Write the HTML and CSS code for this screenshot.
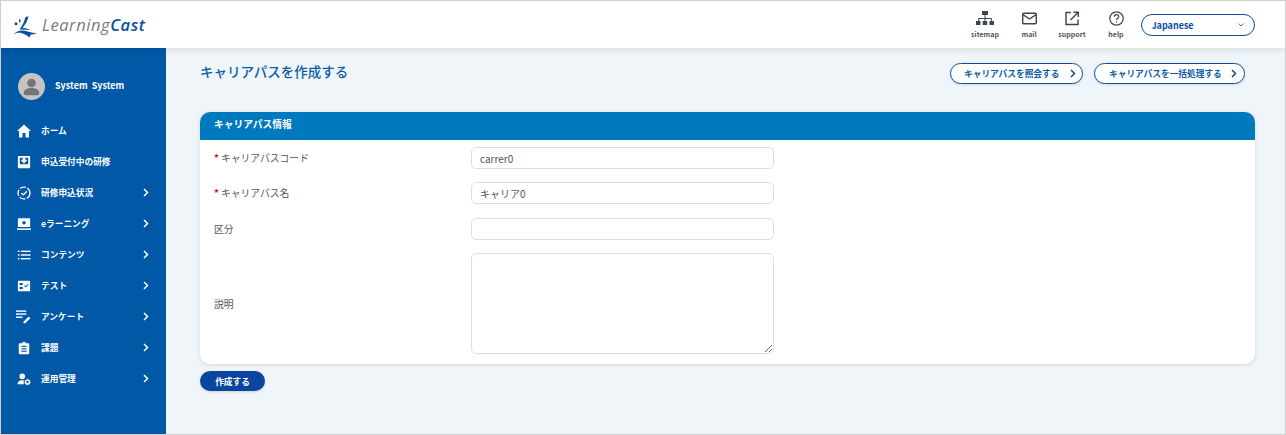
FILE: index.html
```html
<!DOCTYPE html>
<html lang="ja">
<head>
<meta charset="utf-8">
<title>LearningCast</title>
<link rel="stylesheet" href="styles.css">
</head>
<body>
<div class="frame">
  <header class="topbar">
    <div class="logo">
      <svg class="logo-mark" width="24" height="22" viewBox="0 0 24 22"><path fill="#0a50a0" d="M12.500 1 15.500.2C14.500 4.500 12.500 8.500 9.500 12L13 12.300 17.500 14.200C13.500 13.500 10 13.300 6.500 13.500 9.500 9.500 11.300 5.500 12.500 1Z"/><circle cx="3" cy="7.700" r="1.500" fill="#0a50a0"/><path fill="#0a50a0" d="M6 3.500 7.500 3.300 7.500 6.300 6.200 6.500Z"/><path fill="#0a50a0" d="M0 18.500C3.500 15 7 14 10.500 14.500 15 15.200 19 17.300 23.500 17 21 18.500 19 18.800 17.800 18.500L16.500 21.500C13.500 19.300 10.500 17.300 7.500 16.800 4.500 16.400 2.500 17 0 18.500Z"/></svg>
      <span class="logo-text"><span class="logo-a">Learning</span><span class="logo-b">Cast</span></span>
    </div>
    <nav class="tools">
      <a class="tool tool-sitemap">
        <svg width="18" height="15" viewBox="0 0 18 15" fill="#3c4650"><rect x="6" y="0" width="6" height="4"/><rect x="0" y="10" width="4.500" height="4"/><rect x="6.700" y="10" width="4.500" height="4"/><rect x="13.500" y="10" width="4.500" height="4"/><path d="M8.500 4h1v3h6.300v3h-1V8H9.500v2h-1V8H3.200v2h-1V7h6.300z"/></svg>
        <span>sitemap</span>
      </a>
      <a class="tool tool-mail">
        <svg width="15" height="12" viewBox="0 0 15 12" fill="none" stroke="#3c4650" stroke-width="1.400"><rect x=".7" y=".7" width="13.600" height="10.600" rx="1"/><path d="M.9 2.200 7.500 6.500 14.100 2.200"/></svg>
        <span>mail</span>
      </a>
      <a class="tool tool-support">
        <svg width="14" height="14" viewBox="0 0 14 14" fill="none" stroke="#3c4650" stroke-width="1.400"><path d="M6 1H1v12h12V8"/><path d="M5.500 8.500 13 1M8.500 .7h4.800v4.800"/></svg>
        <span>support</span>
      </a>
      <a class="tool tool-help">
        <svg width="15" height="15" viewBox="0 0 15 15" fill="none" stroke="#3c4650" stroke-width="1.200"><circle cx="7.500" cy="7.500" r="6.700"/><path d="M5.300 5.800C5.300 4.500 6.300 3.700 7.500 3.700S9.700 4.500 9.700 5.700C9.700 7.200 7.500 7.200 7.500 9"/><path d="M7.500 10.300v1.200"/></svg>
        <span>help</span>
      </a>
      <div class="lang">
        <span>Japanese</span>
        <svg width="6" height="4" viewBox="0 0 6 4" fill="none" stroke="#4a78ad" stroke-width="1"><path d="M.5.500 3 3 5.500.500"/></svg>
      </div>
    </nav>
  </header>
  <div class="body">
    <aside class="sidebar">
      <div class="user">
        <svg class="avatar" width="27" height="27" viewBox="0 0 27 27"><circle cx="13.500" cy="13.500" r="13.500" fill="#c4c4c4"/><circle cx="13.500" cy="10" r="4.300" fill="#757575"/><path fill="#757575" d="M5.800 20c0-3.800 4.300-5 7.700-5s7.700 1.200 7.700 5c0 1.300-1 2.300-2.300 2.300H8.100C6.800 22.300 5.800 21.300 5.800 20Z"/></svg>
        <span>System&nbsp; System</span>
      </div>
      <ul class="menu">
        <li class="item">
          <svg class="ico ico-home" width="16" height="16" viewBox="0 0 16 16" fill="#fff"><path d="M8 1.500 1 8h2v6.500h3.500V10h3v4.500H13V8h2z"/></svg>
          <span class="lbl">ホーム</span>
        </li>
        <li class="item">
          <svg class="ico" width="14" height="14" viewBox="0 0 16 16"><path fill="#fff" fill-rule="evenodd" d="M2 1h12c.6 0 1 .4 1 1v12c0 .6-.4 1-1 1H2c-.6 0-1-.4-1-1V2c0-.6.4-1 1-1ZM3.200 3v7.500h9.600V3Z"/><path fill="#fff" d="M6.300 3.500h3.400V6H12L8 9.800 4 6h2.300Z"/></svg>
          <span class="lbl">申込受付中の研修</span>
        </li>
        <li class="item">
          <svg class="ico" width="14" height="14" viewBox="0 0 16 16" fill="none" stroke="#fff" stroke-width="1.500"><circle cx="8" cy="8" r="6.800" stroke-dasharray="7 1.800"/><path d="M5 8l2.200 2.200L11.300 6"/></svg>
          <span class="lbl">研修申込状況</span>
          <svg class="chev" width="6" height="9" viewBox="0 0 6 9"><path fill="none" stroke="#fff" stroke-width="1.500" d="M1 1l3.500 3.500L1 8"/></svg>
        </li>
        <li class="item">
          <svg class="ico" width="14" height="14" viewBox="0 0 16 16"><path fill="#fff" fill-rule="evenodd" d="M2 1.500h12c.5 0 1 .4 1 1V11.500H1V2.500c0-.6.500-1 1-1ZM8 4.500a2 2 0 1 0 0 4 2 2 0 0 0 0-4Z"/><rect x="0" y="13" width="16" height="1.700" fill="#fff"/></svg>
          <span class="lbl">eラーニング</span>
          <svg class="chev" width="6" height="9" viewBox="0 0 6 9"><path fill="none" stroke="#fff" stroke-width="1.500" d="M1 1l3.500 3.500L1 8"/></svg>
        </li>
        <li class="item">
          <svg class="ico" width="14" height="14" viewBox="0 0 16 16" fill="#fff"><rect x="1" y="3" width="2" height="1.600"/><rect x="4.500" y="3" width="11" height="1.600"/><rect x="1" y="7.200" width="2" height="1.600"/><rect x="4.500" y="7.200" width="11" height="1.600"/><rect x="1" y="11.400" width="2" height="1.600"/><rect x="4.500" y="11.400" width="11" height="1.600"/></svg>
          <span class="lbl">コンテンツ</span>
          <svg class="chev" width="6" height="9" viewBox="0 0 6 9"><path fill="none" stroke="#fff" stroke-width="1.500" d="M1 1l3.500 3.500L1 8"/></svg>
        </li>
        <li class="item">
          <svg class="ico" width="14" height="14" viewBox="0 0 16 16"><rect x="1" y="2" width="14" height="12" rx="1" fill="#fff"/><g fill="#0058a6"><rect x="3" y="4.500" width="3.500" height="2.500"/><rect x="3" y="9" width="3.500" height="2.500"/></g><path fill="none" stroke="#0058a6" stroke-width="1.200" d="M8.500 7.500 10 9l3-3"/></svg>
          <span class="lbl">テスト</span>
          <svg class="chev" width="6" height="9" viewBox="0 0 6 9"><path fill="none" stroke="#fff" stroke-width="1.500" d="M1 1l3.500 3.500L1 8"/></svg>
        </li>
        <li class="item">
          <svg class="ico ico-wide" width="15" height="15" viewBox="0 0 16 16" fill="#fff"><rect x="0" y="1.500" width="11" height="1.500"/><rect x="0" y="4.700" width="11" height="1.500"/><rect x="0" y="8" width="7" height="1.500"/><path d="M8 13.500 13.500 8l1.800 1.800-5.500 5.500H8Z"/></svg>
          <span class="lbl">アンケート</span>
          <svg class="chev" width="6" height="9" viewBox="0 0 6 9"><path fill="none" stroke="#fff" stroke-width="1.500" d="M1 1l3.500 3.500L1 8"/></svg>
        </li>
        <li class="item">
          <svg class="ico" width="14" height="14" viewBox="0 0 16 16"><path fill="#fff" d="M3 2.500h2.800C6 1.500 7 .8 8 .8s2 .7 2.200 1.700H13c.6 0 1 .4 1 1V14c0 .6-.4 1-1 1H3c-.6 0-1-.4-1-1V3.500c0-.6.400-1 1-1Z"/><g fill="#0058a6"><rect x="5" y="5.500" width="6" height="1.300"/><rect x="5" y="8.300" width="6" height="1.300"/><rect x="5" y="11" width="6" height="1.300"/></g></svg>
          <span class="lbl">課題</span>
          <svg class="chev" width="6" height="9" viewBox="0 0 6 9"><path fill="none" stroke="#fff" stroke-width="1.500" d="M1 1l3.500 3.500L1 8"/></svg>
        </li>
        <li class="item">
          <svg class="ico" width="14" height="14" viewBox="0 0 16 16" fill="#fff"><circle cx="6" cy="5" r="3.200"/><path d="M.5 14c0-3 2.500-4.500 5.500-4.500.7 0 1.200.1 1.700.2V14Z"/><circle cx="12" cy="11.500" r="2.200" fill="none" stroke="#fff" stroke-width="1.600"/><circle cx="12" cy="11.500" r="3.200" fill="none" stroke="#fff" stroke-width="1" stroke-dasharray="1.500 1.300"/></svg>
          <span class="lbl">運用管理</span>
          <svg class="chev" width="6" height="9" viewBox="0 0 6 9"><path fill="none" stroke="#fff" stroke-width="1.500" d="M1 1l3.500 3.500L1 8"/></svg>
        </li>
      </ul>
    </aside>
    <main class="main">
      <div class="page-head">
        <h1>キャリアパスを作成する</h1>
        <div class="head-actions">
          <a class="pill pill-a">キャリアパスを照会する<svg width="6" height="9" viewBox="0 0 6 9"><path fill="none" stroke="#0a4ea0" stroke-width="1.500" d="M1 1l3.500 3.500L1 8"/></svg></a>
          <a class="pill pill-b">キャリアパスを一括処理する<svg width="6" height="9" viewBox="0 0 6 9"><path fill="none" stroke="#0a4ea0" stroke-width="1.500" d="M1 1l3.500 3.500L1 8"/></svg></a>
        </div>
      </div>
      <section class="card">
        <h2 class="card-head">キャリアパス情報</h2>
        <div class="form">
          <div class="row row-1">
            <label><span class="req">*</span>キャリアパスコード</label>
            <input class="field" type="text" value="carrer0">
          </div>
          <div class="row row-2">
            <label><span class="req">*</span>キャリアパス名</label>
            <input class="field" type="text" value="キャリア0">
          </div>
          <div class="row row-3">
            <label>区分</label>
            <input class="field" type="text">
          </div>
          <div class="row row-4">
            <label>説明</label>
            <textarea class="field area"></textarea>
          </div>
        </div>
      </section>
      <button class="submit" type="button">作成する</button>
    </main>
  </div>
</div>
</body>
</html>
```

FILE: styles.css
```css
* { box-sizing: border-box; }
html, body { margin: 0; height: 100%; }
body {
  font-family: "Noto Sans CJK JP", "Noto Sans", sans-serif;
  color: #555;
  background: #f0f5f9;
}
.frame {
  height: 435px;
  border: 1px solid #cfcfcf;
  display: flex;
  flex-direction: column;
  overflow: hidden;
}
.topbar {
  height: 47px;
  flex: none;
  background: #fff;
  display: flex;
  justify-content: space-between;
  align-items: center;
  box-shadow: 0 2px 6px rgba(0, 0, 0, .1);
  position: relative;
  z-index: 2;
  padding: 0 30px 0 12px;
}
.logo { display: flex; align-items: center; gap: 5px; margin-top: 5px; }
.logo-mark { flex: none; }
.logo-text {
  font-family: "Open Sans", sans-serif;
  font-style: italic;
  font-size: 16.500px;
  letter-spacing: .55px;
  line-height: 20px;
  margin-top: -4px;
}
.logo-a { color: #7d7d7d; }
.logo-b { color: #0a50a0; font-weight: 600; }

.tools { display: flex; align-items: center; }
.tool {
  display: flex;
  flex-direction: column;
  align-items: center;
  font-size: 7px;
  font-weight: 700;
  color: #555;
  line-height: 10px;
}
.tool svg { height: 15px; margin-bottom: 3px; }
.tool-sitemap { width: 30px; margin-right: 14px; }
.tool-mail { width: 30px; margin-right: 13px; }
.tool-support { width: 30px; margin-right: 14px; }
.tool-help { width: 30px; margin-right: 10px; }
.lang {
  width: 114px;
  height: 22px;
  border: 1.500px solid #0a4ea0;
  border-radius: 11px;
  display: flex;
  align-items: center;
  justify-content: space-between;
  padding: 1px 10px 0 9.500px;
  font-size: 9px;
  font-weight: 700;
  color: #0a4ea0;
  background: #fff;
}

.body { flex: 1; display: flex; min-height: 0; }
.sidebar {
  width: 165px;
  flex: none;
  background: #0058a6;
  color: #fff;
}
.user {
  display: flex;
  align-items: center;
  gap: 10px;
  padding: 24px 0 0 17px;
  font-size: 9px;
  font-weight: 700;
  line-height: 28px;
}
.avatar { flex: none; }
.menu { list-style: none; margin: 15px 0 0; padding: 0; }
.item {
  height: 31px;
  display: flex;
  align-items: center;
  padding: 0 17px 0 16px;
  font-size: 8.700px;
  font-weight: 700;
}
.ico { flex: none; margin-right: 10px; }
.ico-home { margin-left: -1px; margin-right: 9px; }
.ico-wide { margin-left: -1px; margin-right: 10px; }
.lbl { flex: 1; white-space: nowrap; }
.chev { flex: none; }

.main { flex: 1; min-width: 0; padding: 0 30px 0 34px; }
.page-head {
  display: flex;
  justify-content: space-between;
  height: 64px;
  padding-top: 13px;
}
h1 {
  margin: 0;
  font-size: 13.500px;
  font-weight: 500;
  line-height: 20px;
  color: #0a5ea8;
}
.head-actions { display: flex; gap: 11px; align-items: flex-start; padding-top: 2px; margin-right: 10px; }
.pill {
  height: 21px;
  border: 1.500px solid #0a4ea0;
  border-radius: 11px;
  background: #fff;
  color: #0a5ea8;
  font-size: 8.700px;
  font-weight: 700;
  display: flex;
  align-items: center;
  justify-content: space-between;
  box-shadow: 0 1px 3px rgba(0, 0, 0, .12);
}
.pill-a { width: 133px; padding: 0 6px 0 13px; }
.pill-b { width: 151px; padding: 0 7px 0 14px; }

.card {
  background: #fff;
  border-radius: 10px;
  overflow: hidden;
  box-shadow: 0 1px 4px rgba(0, 0, 0, .12);
  height: 252px;
}
.card-head {
  margin: 0;
  height: 28px;
  background: #0079bf;
  color: #fff;
  font-size: 9.750px;
  font-weight: 700;
  line-height: 25px;
  padding-left: 14px;
}
.form { display: flex; flex-direction: column; padding-top: 7px; }
.row { display: grid; grid-template-columns: 271px 303px; align-items: center; font-size: 9.800px; }
.row-1 { height: 22px; margin-bottom: 13px; }
.row-2 { height: 22px; margin-bottom: 14px; }
.row-3 { height: 22px; margin-bottom: 13px; }
.row-4 { height: 101px; }
.row label { font-weight: 400; color: #555; padding-left: 14px; }
.req { color: #e01010; font-weight: 700; margin-right: 2px; }
.field {
  width: 303px;
  height: 22px;
  border: 1.500px solid #dedede;
  border-radius: 5px;
  background: #fff;
  padding: 0 8px;
  font-family: "Noto Sans CJK JP", "Noto Sans", sans-serif;
  font-size: 10px;
  color: #555;
  outline: none;
}
.area { height: 101px; margin: 0; display: block; }
.submit {
  display: block;
  margin-top: 7px;
  width: 65px;
  height: 20px;
  border: 0;
  border-radius: 10px;
  background: #0a46a0;
  color: #fff;
  font-family: inherit;
  font-size: 8.700px;
  font-weight: 700;
  padding: 0;
  box-shadow: 0 1px 3px rgba(0, 0, 0, .15);
}
```
